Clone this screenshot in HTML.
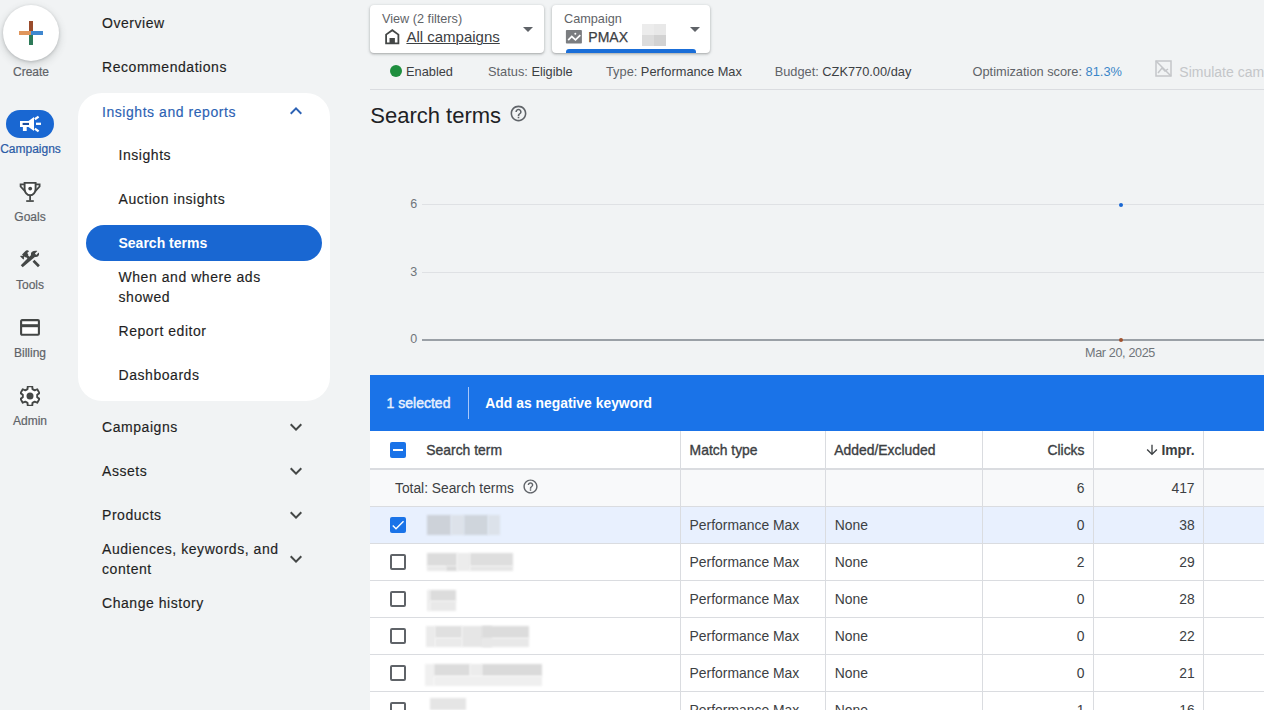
<!DOCTYPE html>
<html><head><meta charset="utf-8"><style>
html,body{margin:0;padding:0;}
body{width:1264px;height:710px;overflow:hidden;position:relative;background:#f1f3f4;font-family:"Liberation Sans",sans-serif;}
.t{position:absolute;white-space:nowrap;line-height:1;}
.r{position:absolute;}
</style></head><body>
<div class="r" style="left:3px;top:5px;width:56px;height:56px;background:#fff;border-radius:50%;box-shadow:0 1px 3px 0 rgba(60,64,67,.25),0 3px 7px 2px rgba(60,64,67,.12);"></div>
<div class="r" style="left:29px;top:21px;width:4px;height:12px;background:#9a4c2c;"></div>
<div class="r" style="left:29px;top:33px;width:4px;height:12px;background:#2d7a58;"></div>
<div class="r" style="left:19px;top:31px;width:12px;height:4px;background:#e0965c;"></div>
<div class="r" style="left:31px;top:31px;width:12px;height:4px;background:#3f87cf;"></div>
<div class="t" style="top:66.04px;font-size:12px;color:#5f6368;font-weight:400;left:1.0px;width:60px;text-align:center;-webkit-text-stroke:0.2px #5f6368;">Create</div>
<div class="r" style="left:6px;top:110px;width:48px;height:28px;background:#1967d2;border-radius:14px;"></div>
<svg class="r" style="left:15px;top:108px" width="32" height="32" viewBox="0 0 32 32"><path fill="#fff" d="M5 13H13.5L19 9V23L13.5 19H11.7V23H7.9V19H5Z"/><rect x="7.6" y="14.9" width="6.4" height="2.1" fill="#1d4f9e"/><g stroke="#fff" stroke-width="2.3"><line x1="19.8" y1="11.2" x2="23.6" y2="8.6"/><line x1="21" y1="15.8" x2="26" y2="15.8"/><line x1="19.8" y1="20.6" x2="23.6" y2="23.4"/></g></svg>
<div class="t" style="top:142.84px;font-size:12px;color:#2a5aa6;font-weight:400;left:-4.5px;width:70px;text-align:center;-webkit-text-stroke:0.2px #2a5aa6;">Campaigns</div>
<svg class="r" style="left:14px;top:176px" width="32" height="32" viewBox="0 0 32 32"><path d="M10.6 6.9H21.6V13C21.6 16.3 19.2 19.2 16.1 19.2C13 19.2 10.6 16.3 10.6 13Z" fill="#fff" stroke="#444746" stroke-width="1.9"/><path d="M10.6 8.4H6.6V10.5L10.9 15.2M21.6 8.4H25.6V10.5L21.3 15.2" fill="none" stroke="#444746" stroke-width="1.8"/><line x1="16.1" y1="19" x2="16.1" y2="24.5" stroke="#444746" stroke-width="1.8"/><rect x="12.2" y="24.2" width="7.6" height="1.7" fill="#444746"/><circle cx="16.2" cy="12.6" r="1.9" fill="#444746"/></svg>
<div class="t" style="top:210.84px;font-size:12px;color:#5f6368;font-weight:400;left:0.0px;width:60px;text-align:center;-webkit-text-stroke:0.2px #5f6368;">Goals</div>
<svg class="r" style="left:20.2px;top:248.4px" width="21.8" height="21.8" viewBox="0 0 24 24"><path fill="#444746" d="M13.783 15.172l2.121-2.121 5.996 5.996-2.121 2.121zM17.5 10c1.93 0 3.5-1.57 3.5-3.5 0-.58-.16-1.12-.41-1.6l-2.7 2.7-1.49-1.49 2.7-2.7c-.48-.25-1.02-.41-1.6-.41C13.57 3 12 4.57 12 6.5c0 .41.08.8.21 1.16l-1.85 1.850-1.78-1.78.71-.71-1.41-1.41L10 3.49c-1.17-1.17-3.07-1.17-4.24 0L2.22 7.03l1.41 1.41H.81l-.71.71 3.54 3.54.71-.71V9.15l1.41 1.41.71-.71 1.78 1.78-7.41 7.41 2.12 2.12L16.34 9.79c.36.13.75.21 1.16.21z"/></svg>
<div class="t" style="top:278.84px;font-size:12px;color:#5f6368;font-weight:400;left:0.0px;width:60px;text-align:center;-webkit-text-stroke:0.2px #5f6368;">Tools</div>
<svg class="r" style="left:20px;top:319px" width="20" height="17" viewBox="0 0 20 17"><rect x="1.1" y="1.1" width="17.8" height="14.6" rx="1" fill="#fff" stroke="#444746" stroke-width="2.1"/><rect x="1" y="5.2" width="18" height="3" fill="#444746"/></svg>
<div class="t" style="top:346.84px;font-size:12px;color:#5f6368;font-weight:400;left:0.0px;width:60px;text-align:center;-webkit-text-stroke:0.2px #5f6368;">Billing</div>
<svg class="r" style="left:20px;top:386px" width="20" height="20" viewBox="0 0 20 20"><path d="M12.50 3.14 L12.23 0.35 L7.77 0.35 L7.50 3.14 L5.31 4.41 L2.76 3.25 L0.53 7.11 L2.81 8.73 L2.81 11.27 L0.53 12.89 L2.76 16.75 L5.31 15.59 L7.50 16.86 L7.77 19.65 L12.23 19.65 L12.50 16.86 L14.69 15.59 L17.24 16.75 L19.47 12.89 L17.19 11.27 L17.19 8.73 L19.47 7.11 L17.24 3.25 L14.69 4.41Z" fill="#fff" stroke="#444746" stroke-width="1.9" stroke-linejoin="round"/><circle cx="10" cy="10" r="3.5" fill="#444746"/></svg>
<div class="t" style="top:414.84px;font-size:12px;color:#5f6368;font-weight:400;left:0.0px;width:60px;text-align:center;-webkit-text-stroke:0.2px #5f6368;">Admin</div>
<div class="t" style="top:15.95px;font-size:14px;color:#1f1f1f;font-weight:400;left:102px;letter-spacing:0.55px;-webkit-text-stroke:0.15px currentColor;">Overview</div>
<div class="t" style="top:59.75px;font-size:14px;color:#1f1f1f;font-weight:400;left:102px;letter-spacing:0.55px;-webkit-text-stroke:0.15px currentColor;">Recommendations</div>
<div class="r" style="left:78px;top:93px;width:252px;height:308px;background:#fff;border-radius:24px;"></div>
<div class="t" style="top:104.65px;font-size:14px;color:#2c62b4;font-weight:400;left:102px;letter-spacing:0.55px;-webkit-text-stroke:0.15px currentColor;">Insights and reports</div>
<svg class="r" style="left:284px;top:99px" width="24" height="24" viewBox="0 0 24 24"><path fill="#2c62b4" d="M12 8l-6 6 1.41 1.41L12 10.83l4.59 4.58L18 14z"/></svg>
<div class="t" style="top:148.45px;font-size:14px;color:#1f1f1f;font-weight:400;left:118.5px;letter-spacing:0.55px;-webkit-text-stroke:0.15px currentColor;">Insights</div>
<div class="t" style="top:192.25px;font-size:14px;color:#1f1f1f;font-weight:400;left:118.5px;letter-spacing:0.55px;-webkit-text-stroke:0.15px currentColor;">Auction insights</div>
<div class="r" style="left:86px;top:225px;width:236px;height:36px;background:#1967d2;border-radius:18px;"></div>
<div class="t" style="top:236.15px;font-size:14px;color:#fff;font-weight:700;left:118.5px;">Search terms</div>
<div class="t" style="top:269.55px;font-size:14px;color:#1f1f1f;font-weight:400;left:118.5px;letter-spacing:0.55px;-webkit-text-stroke:0.15px currentColor;">When and where ads</div>
<div class="t" style="top:290.15px;font-size:14px;color:#1f1f1f;font-weight:400;left:118.5px;letter-spacing:0.55px;-webkit-text-stroke:0.15px currentColor;">showed</div>
<div class="t" style="top:324.05px;font-size:14px;color:#1f1f1f;font-weight:400;left:118.5px;letter-spacing:0.55px;-webkit-text-stroke:0.15px currentColor;">Report editor</div>
<div class="t" style="top:367.85px;font-size:14px;color:#1f1f1f;font-weight:400;left:118.5px;letter-spacing:0.55px;-webkit-text-stroke:0.15px currentColor;">Dashboards</div>
<div class="t" style="top:420.15px;font-size:14px;color:#1f1f1f;font-weight:400;left:102px;letter-spacing:0.55px;-webkit-text-stroke:0.15px currentColor;">Campaigns</div>
<svg class="r" style="left:284px;top:415px" width="24" height="24" viewBox="0 0 24 24"><path fill="#444746" d="M16.59 8.59L12 13.17 7.41 8.59 6 10l6 6 6-6z"/></svg>
<div class="t" style="top:464.15px;font-size:14px;color:#1f1f1f;font-weight:400;left:102px;letter-spacing:0.55px;-webkit-text-stroke:0.15px currentColor;">Assets</div>
<svg class="r" style="left:284px;top:459px" width="24" height="24" viewBox="0 0 24 24"><path fill="#444746" d="M16.59 8.59L12 13.17 7.41 8.59 6 10l6 6 6-6z"/></svg>
<div class="t" style="top:508.15px;font-size:14px;color:#1f1f1f;font-weight:400;left:102px;letter-spacing:0.55px;-webkit-text-stroke:0.15px currentColor;">Products</div>
<svg class="r" style="left:284px;top:503px" width="24" height="24" viewBox="0 0 24 24"><path fill="#444746" d="M16.59 8.59L12 13.17 7.41 8.59 6 10l6 6 6-6z"/></svg>
<div class="t" style="top:542.15px;font-size:14px;color:#1f1f1f;font-weight:400;left:102px;letter-spacing:0.55px;-webkit-text-stroke:0.15px currentColor;">Audiences, keywords, and</div>
<div class="t" style="top:561.75px;font-size:14px;color:#1f1f1f;font-weight:400;left:102px;letter-spacing:0.55px;-webkit-text-stroke:0.15px currentColor;">content</div>
<svg class="r" style="left:284px;top:547px" width="24" height="24" viewBox="0 0 24 24"><path fill="#444746" d="M16.59 8.59L12 13.17 7.41 8.59 6 10l6 6 6-6z"/></svg>
<div class="t" style="top:596.45px;font-size:14px;color:#1f1f1f;font-weight:400;left:102px;letter-spacing:0.55px;-webkit-text-stroke:0.15px currentColor;">Change history</div>
<div class="r" style="left:370px;top:5px;width:174px;height:48px;background:#fff;border-radius:4px;box-shadow:0 1px 2px rgba(60,64,67,.3),0 1px 3px 1px rgba(60,64,67,.12);"></div>
<div class="t" style="top:12.85px;font-size:12.7px;color:#5f6368;font-weight:400;left:382px;">View (2 filters)</div>
<svg class="r" style="left:380px;top:25px" width="24" height="24" viewBox="0 0 24 24"><path d="M6.1 18.4V9.6L12.3 5.2L18.4 9.6V18.4Z" fill="none" stroke="#444746" stroke-width="1.8" stroke-linejoin="miter"/><rect x="9.5" y="13" width="5.4" height="5.4" fill="#444746"/></svg>
<div class="t" style="top:29.30px;font-size:15px;color:#3c4043;font-weight:400;left:406.4px;text-decoration:underline;text-decoration-thickness:1px;text-underline-offset:1px;">All campaigns</div>
<svg class="r" style="left:516px;top:17px" width="24" height="24" viewBox="0 0 24 24"><path fill="#5f6368" d="M7 10l5 5 5-5z"/></svg>
<div class="r" style="left:552px;top:5px;width:158px;height:48px;background:#fff;border-radius:4px;box-shadow:0 1px 2px rgba(60,64,67,.3),0 1px 3px 1px rgba(60,64,67,.12);"></div>
<div class="t" style="top:12.85px;font-size:12.7px;color:#5f6368;font-weight:400;left:564px;">Campaign</div>
<svg class="r" style="left:562px;top:26px" width="24" height="24" viewBox="0 0 24 24"><rect x="3.9" y="4.1" width="16" height="13.5" rx="0.8" fill="#7b7d80"/><polyline points="6.2,14.2 9.8,10.5 13.5,13.9 18.3,9.1" fill="none" stroke="#fff" stroke-width="1.7"/><circle cx="13.3" cy="7.8" r="1" fill="#fff"/></svg>
<div class="t" style="top:30.15px;font-size:14px;color:#3c4043;font-weight:400;left:588.3px;-webkit-text-stroke:0.25px #3c4043;">PMAX</div>
<div class="r" style="left:642px;top:24px;width:12px;height:11px;background:#ececec;"></div>
<div class="r" style="left:654px;top:24px;width:12px;height:11px;background:#e8e8e8;"></div>
<div class="r" style="left:642px;top:35px;width:12px;height:11px;background:#dcdcdc;"></div>
<div class="r" style="left:654px;top:35px;width:12px;height:11px;background:#d2d2d2;"></div>
<svg class="r" style="left:683px;top:17px" width="24" height="24" viewBox="0 0 24 24"><path fill="#5f6368" d="M7 10l5 5 5-5z"/></svg>
<div class="r" style="left:566px;top:49px;width:130px;height:4px;background:#1a6ed8;border-radius:3px 3px 0 0;"></div>
<div class="r" style="left:390px;top:65px;width:12px;height:12px;background:#1e8e3e;border-radius:50%;"></div>
<div class="t" style="top:65.56px;font-size:12.8px;color:#3c4043;font-weight:400;left:406px;">Enabled</div>
<div class="t" style="top:65.56px;font-size:12.8px;color:#3c4043;font-weight:400;left:488px;"><span style="color:#5f6368">Status:</span> Eligible</div>
<div class="t" style="top:65.56px;font-size:12.8px;color:#3c4043;font-weight:400;left:606px;"><span style="color:#5f6368">Type:</span> Performance Max</div>
<div class="t" style="top:65.56px;font-size:12.8px;color:#3c4043;font-weight:400;left:774.7px;"><span style="color:#5f6368">Budget:</span> CZK770.00/day</div>
<div class="t" style="top:65.56px;font-size:12.8px;color:#3c4043;font-weight:400;left:972.5px;"><span style="color:#5f6368">Optimization score:</span> <span style="color:#3a86c8">81.3%</span></div>
<svg class="r" style="left:1155px;top:60px" width="17" height="17" viewBox="0 0 17 17"><rect x="1" y="1" width="15" height="15" fill="none" stroke="#c4c6c9" stroke-width="1.5"/><line x1="1" y1="1" x2="16" y2="16" stroke="#c4c6c9" stroke-width="1.5"/><polyline points="3,13 7,8 10,11 13,9" fill="none" stroke="#c4c6c9" stroke-width="1.5"/></svg>
<div class="t" style="top:64.55px;font-size:14px;color:#c4c6c9;font-weight:400;left:1179.3px;">Simulate campaign</div>
<div class="r" style="left:370px;top:89px;width:894px;height:1px;background:#dadce0;"></div>
<div class="t" style="top:104.57px;font-size:22px;color:#202124;font-weight:400;left:370.3px;">Search terms</div>
<svg class="r" style="left:509px;top:104px" width="19" height="19" viewBox="0 0 24 24"><path fill="#5f6368" d="M11 18h2v-2h-2v2zm1-16C6.48 2 2 6.48 2 12s4.480 10 10 10 10-4.48 10-10S17.52 2 12 2zm0 18c-4.41 0-8-3.59-8-8s3.59-8 8-8 8 3.59 8 8-3.59 8-8 8zm0-14c-2.21 0-4 1.79-4 4h2c0-1.1.9-2 2-2s2 .9 2 2c0 2-3 1.75-3 5h2c0-2.25 3-2.5 3-5 0-2.21-1.79-4-4-4z"/></svg>
<div class="r" style="left:422px;top:204px;width:842px;height:1px;background:#dfe1e4;"></div>
<div class="r" style="left:422px;top:272px;width:842px;height:1px;background:#dfe1e4;"></div>
<div class="r" style="left:422px;top:339px;width:842px;height:2px;background:#9aa0a6;"></div>
<div class="t" style="top:198.22px;font-size:12.5px;color:#70757a;font-weight:400;right:846.8px;text-align:right;">6</div>
<div class="t" style="top:266.22px;font-size:12.5px;color:#70757a;font-weight:400;right:846.8px;text-align:right;">3</div>
<div class="t" style="top:333.22px;font-size:12.5px;color:#70757a;font-weight:400;right:846.8px;text-align:right;">0</div>
<div class="t" style="top:346.53px;font-size:12.6px;color:#70757a;font-weight:400;left:1070.0px;width:100px;text-align:center;letter-spacing:-0.35px;">Mar 20, 2025</div>
<div class="r" style="left:1118.5px;top:202.5px;width:4px;height:4px;background:#1967d2;border-radius:50%;"></div>
<div class="r" style="left:1118.5px;top:338px;width:4px;height:4px;background:#a0522d;border-radius:50%;"></div>
<div class="r" style="left:370px;top:375px;width:894px;height:56px;background:#1a73e8;"></div>
<div class="t" style="top:395.75px;font-size:14px;color:#e8f0fe;font-weight:400;left:386.6px;-webkit-text-stroke:0.45px #e8f0fe;">1 selected</div>
<div class="r" style="left:468px;top:387px;width:1px;height:32px;background:#a8c7fa;"></div>
<div class="t" style="top:396.73px;font-size:13.9px;color:#fff;font-weight:700;left:485.3px;">Add as negative keyword</div>
<div class="r" style="left:370px;top:431px;width:894px;height:279px;background:#fff;"></div>
<div class="r" style="left:370px;top:469px;width:894px;height:37px;background:#f8f9fa;"></div>
<div class="r" style="left:370px;top:506px;width:894px;height:37px;background:#e8f0fe;"></div>
<div class="r" style="left:370px;top:506px;width:894px;height:1px;background:#dadce0;"></div>
<div class="r" style="left:370px;top:543px;width:894px;height:1px;background:#dadce0;"></div>
<div class="r" style="left:370px;top:580px;width:894px;height:1px;background:#dadce0;"></div>
<div class="r" style="left:370px;top:617px;width:894px;height:1px;background:#dadce0;"></div>
<div class="r" style="left:370px;top:654px;width:894px;height:1px;background:#dadce0;"></div>
<div class="r" style="left:370px;top:691px;width:894px;height:1px;background:#dadce0;"></div>
<div class="r" style="left:370px;top:468px;width:894px;height:2px;background:#dadce0;"></div>
<div class="r" style="left:680px;top:431px;width:1px;height:279px;background:#dadce0;"></div>
<div class="r" style="left:825px;top:431px;width:1px;height:279px;background:#dadce0;"></div>
<div class="r" style="left:982px;top:431px;width:1px;height:279px;background:#dadce0;"></div>
<div class="r" style="left:1093px;top:431px;width:1px;height:279px;background:#dadce0;"></div>
<div class="r" style="left:1203px;top:431px;width:1px;height:279px;background:#dadce0;"></div>
<div class="r" style="left:390px;top:442px;width:16px;height:16px;background:#1a73e8;border-radius:2px;"></div>
<div class="r" style="left:393px;top:449px;width:10px;height:2px;background:#fff;"></div>
<div class="t" style="top:444.03px;font-size:13.9px;color:#3c4043;font-weight:400;left:426.3px;-webkit-text-stroke:0.35px #3c4043;">Search term</div>
<div class="t" style="top:444.03px;font-size:13.9px;color:#3c4043;font-weight:400;left:689.6px;-webkit-text-stroke:0.35px #3c4043;">Match type</div>
<div class="t" style="top:444.03px;font-size:13.9px;color:#3c4043;font-weight:400;left:834.3px;-webkit-text-stroke:0.35px #3c4043;">Added/Excluded</div>
<div class="t" style="top:444.03px;font-size:13.9px;color:#3c4043;font-weight:400;right:179.5px;text-align:right;-webkit-text-stroke:0.35px #3c4043;">Clicks</div>
<div class="t" style="top:444.03px;font-size:13.9px;color:#3c4043;font-weight:700;right:69.40000000000009px;text-align:right;">Impr.</div>
<svg class="r" style="left:1144px;top:442px" width="16" height="16" viewBox="0 0 24 24"><path fill="#3c4043" d="M20 12l-1.41-1.41L13 16.17V4h-2v12.17l-5.58-5.59L4 12l8 8 8-8z"/></svg>
<div class="t" style="top:481.72px;font-size:13.8px;color:#3c4043;font-weight:400;left:395px;">Total: Search terms</div>
<svg class="r" style="left:522px;top:478px" width="17" height="17" viewBox="0 0 24 24"><path fill="#5f6368" d="M11 18h2v-2h-2v2zm1-16C6.48 2 2 6.48 2 12s4.48 10 10 10 10-4.48 10-10S17.52 2 12 2zm0 18c-4.41 0-8-3.59-8-8s3.59-8 8-8 8 3.59 8 8-3.59 8-8 8zm0-14c-2.21 0-4 1.79-4 4h2c0-1.1.9-2 2-2s2 .9 2 2c0 2-3 1.75-3 5h2c0-2.25 3-2.5 3-5 0-2.21-1.79-4-4-4z"/></svg>
<div class="t" style="top:481.63px;font-size:13.9px;color:#3c4043;font-weight:400;right:179.5px;text-align:right;">6</div>
<div class="t" style="top:481.63px;font-size:13.9px;color:#3c4043;font-weight:400;right:69.40000000000009px;text-align:right;">417</div>
<div class="r" style="left:390px;top:517px;width:16px;height:16px;background:#1a73e8;border-radius:2px;"></div>
<svg class="r" style="left:390px;top:517px" width="16" height="16" viewBox="0 0 24 24"><path fill="#fff" d="M9 16.17L4.83 12l-1.42 1.41L9 19 21 7l-1.41-1.41z"/></svg>
<div class="r" style="left:427px;top:515px;width:24px;height:20px;background:#cdd2d9;filter:blur(0.8px);"></div>
<div class="r" style="left:451px;top:515px;width:13px;height:20px;background:#dde2ea;filter:blur(0.8px);"></div>
<div class="r" style="left:464px;top:515px;width:24px;height:20px;background:#cfd5dc;filter:blur(0.8px);"></div>
<div class="r" style="left:488px;top:515px;width:12px;height:20px;background:#dce2ea;filter:blur(0.8px);"></div>
<div class="t" style="top:519.03px;font-size:13.9px;color:#3c4043;font-weight:400;left:689.6px;">Performance Max</div>
<div class="t" style="top:519.03px;font-size:13.9px;color:#3c4043;font-weight:400;left:834.7px;">None</div>
<div class="t" style="top:519.03px;font-size:13.9px;color:#3c4043;font-weight:400;right:179.5px;text-align:right;">0</div>
<div class="t" style="top:519.03px;font-size:13.9px;color:#3c4043;font-weight:400;right:69.40000000000009px;text-align:right;">38</div>
<div class="r" style="left:390px;top:554px;width:16px;height:16px;border:2px solid #5f6368;border-radius:2px;box-sizing:border-box;"></div>
<div class="r" style="left:427px;top:553px;width:30px;height:13px;background:#dcdcdc;filter:blur(0.8px);"></div>
<div class="r" style="left:427px;top:566px;width:19px;height:5px;background:#e9e9e9;filter:blur(0.8px);"></div>
<div class="r" style="left:446px;top:566px;width:11px;height:5px;background:#dadada;filter:blur(0.8px);"></div>
<div class="r" style="left:457px;top:553px;width:13px;height:18px;background:#ececec;filter:blur(0.8px);"></div>
<div class="r" style="left:470px;top:553px;width:43px;height:13px;background:#dedede;filter:blur(0.8px);"></div>
<div class="r" style="left:470px;top:566px;width:43px;height:5px;background:#e6e6e6;filter:blur(0.8px);"></div>
<div class="t" style="top:556.03px;font-size:13.9px;color:#3c4043;font-weight:400;left:689.6px;">Performance Max</div>
<div class="t" style="top:556.03px;font-size:13.9px;color:#3c4043;font-weight:400;left:834.7px;">None</div>
<div class="t" style="top:556.03px;font-size:13.9px;color:#3c4043;font-weight:400;right:179.5px;text-align:right;">2</div>
<div class="t" style="top:556.03px;font-size:13.9px;color:#3c4043;font-weight:400;right:69.40000000000009px;text-align:right;">29</div>
<div class="r" style="left:390px;top:591px;width:16px;height:16px;border:2px solid #5f6368;border-radius:2px;box-sizing:border-box;"></div>
<div class="r" style="left:427px;top:590px;width:3px;height:21px;background:#ececec;filter:blur(0.8px);"></div>
<div class="r" style="left:430px;top:590px;width:26px;height:11px;background:#dcdcdc;filter:blur(0.8px);"></div>
<div class="r" style="left:430px;top:601px;width:26px;height:10px;background:#e9e9e9;filter:blur(0.8px);"></div>
<div class="t" style="top:593.03px;font-size:13.9px;color:#3c4043;font-weight:400;left:689.6px;">Performance Max</div>
<div class="t" style="top:593.03px;font-size:13.9px;color:#3c4043;font-weight:400;left:834.7px;">None</div>
<div class="t" style="top:593.03px;font-size:13.9px;color:#3c4043;font-weight:400;right:179.5px;text-align:right;">0</div>
<div class="t" style="top:593.03px;font-size:13.9px;color:#3c4043;font-weight:400;right:69.40000000000009px;text-align:right;">28</div>
<div class="r" style="left:390px;top:628px;width:16px;height:16px;border:2px solid #5f6368;border-radius:2px;box-sizing:border-box;"></div>
<div class="r" style="left:426px;top:626px;width:9px;height:21px;background:#ebebeb;filter:blur(0.8px);"></div>
<div class="r" style="left:435px;top:626px;width:27px;height:12px;background:#e0e0e0;filter:blur(0.8px);"></div>
<div class="r" style="left:435px;top:638px;width:27px;height:9px;background:#eaeaea;filter:blur(0.8px);"></div>
<div class="r" style="left:462px;top:626px;width:30px;height:21px;background:#e6e6e6;filter:blur(0.8px);"></div>
<div class="r" style="left:482px;top:626px;width:47px;height:12px;background:#dcdcdc;filter:blur(0.8px);"></div>
<div class="r" style="left:482px;top:638px;width:47px;height:9px;background:#e8e8e8;filter:blur(0.8px);"></div>
<div class="t" style="top:630.03px;font-size:13.9px;color:#3c4043;font-weight:400;left:689.6px;">Performance Max</div>
<div class="t" style="top:630.03px;font-size:13.9px;color:#3c4043;font-weight:400;left:834.7px;">None</div>
<div class="t" style="top:630.03px;font-size:13.9px;color:#3c4043;font-weight:400;right:179.5px;text-align:right;">0</div>
<div class="t" style="top:630.03px;font-size:13.9px;color:#3c4043;font-weight:400;right:69.40000000000009px;text-align:right;">22</div>
<div class="r" style="left:390px;top:665px;width:16px;height:16px;border:2px solid #5f6368;border-radius:2px;box-sizing:border-box;"></div>
<div class="r" style="left:425px;top:664px;width:9px;height:22px;background:#f0f0f0;filter:blur(0.8px);"></div>
<div class="r" style="left:434px;top:664px;width:36px;height:12px;background:#dcdcdc;filter:blur(0.8px);"></div>
<div class="r" style="left:470px;top:664px;width:12px;height:12px;background:#ececec;filter:blur(0.8px);"></div>
<div class="r" style="left:482px;top:664px;width:60px;height:12px;background:#dadada;filter:blur(0.8px);"></div>
<div class="r" style="left:434px;top:676px;width:108px;height:10px;background:#efefef;filter:blur(0.8px);"></div>
<div class="t" style="top:667.03px;font-size:13.9px;color:#3c4043;font-weight:400;left:689.6px;">Performance Max</div>
<div class="t" style="top:667.03px;font-size:13.9px;color:#3c4043;font-weight:400;left:834.7px;">None</div>
<div class="t" style="top:667.03px;font-size:13.9px;color:#3c4043;font-weight:400;right:179.5px;text-align:right;">0</div>
<div class="t" style="top:667.03px;font-size:13.9px;color:#3c4043;font-weight:400;right:69.40000000000009px;text-align:right;">21</div>
<div class="r" style="left:390px;top:702px;width:16px;height:16px;border:2px solid #5f6368;border-radius:2px;box-sizing:border-box;"></div>
<div class="r" style="left:430px;top:698px;width:36px;height:12px;background:#e5e5e5;filter:blur(0.8px);"></div>
<div class="t" style="top:704.03px;font-size:13.9px;color:#3c4043;font-weight:400;left:689.6px;">Performance Max</div>
<div class="t" style="top:704.03px;font-size:13.9px;color:#3c4043;font-weight:400;left:834.7px;">None</div>
<div class="t" style="top:704.03px;font-size:13.9px;color:#3c4043;font-weight:400;right:179.5px;text-align:right;">1</div>
<div class="t" style="top:704.03px;font-size:13.9px;color:#3c4043;font-weight:400;right:69.40000000000009px;text-align:right;">16</div>
</body></html>
